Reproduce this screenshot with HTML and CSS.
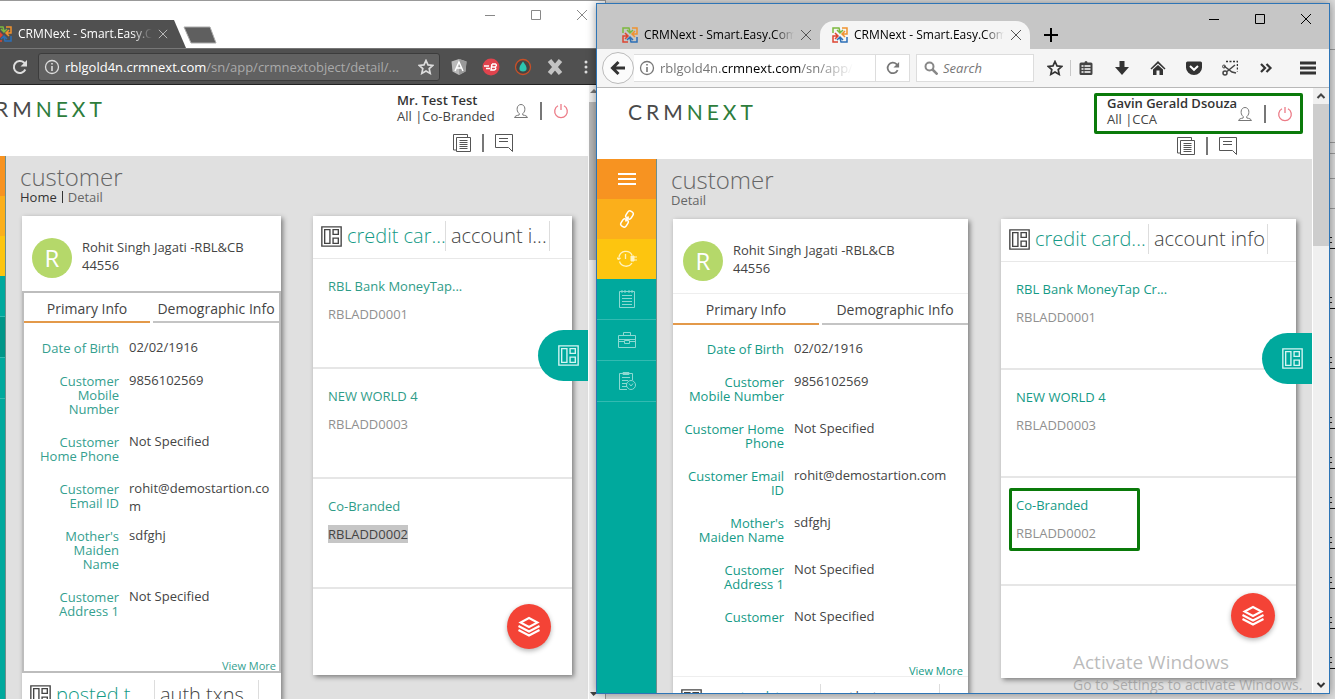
FILE: index.html
```html
<!DOCTYPE html>
<html lang="en">
<head>
<meta charset="utf-8">
<title>CRMNext - Smart.Easy.Complete</title>
<link rel="stylesheet" href="styles.css">
</head>
<body>
<svg class="defs" aria-hidden="true">
  <symbol id="favicon" viewBox="0 0 16 16"><g fill="none" stroke-width="1.500"><path d="M1 6V1h6l1 4M5 3l3 3 3-3" stroke="#7cb93e"/><path d="M10 1h5v6h-4M13 4l-3 3 3 3" stroke="#f0922e"/><path d="M15 10v5H9l-1-4M5 13l3-3 3 3" stroke="#2c6fb7"/><path d="M6 15H1V9h4M3 6l3 3-3 3" stroke="#dd4632"/></g></symbol>
  <symbol id="close" viewBox="0 0 12 12"><path d="M1 1l10 10M11 1L1 11" fill="none" stroke="currentColor"/></symbol>
  <symbol id="min" viewBox="0 0 12 12"><path d="M1 6.500h10" fill="none" stroke="currentColor"/></symbol>
  <symbol id="max" viewBox="0 0 12 12"><path d="M1.500 1.500h9v9h-9z" fill="none" stroke="currentColor"/></symbol>
  <symbol id="reload" viewBox="0 0 16 16"><path d="M13.300 10.500A6 6 0 1 1 12 3.600l1.500 1.600" fill="none" stroke="currentColor" stroke-width="2"/><path d="M15 1v6.500H8.500z" fill="currentColor"/></symbol>
  <symbol id="info" viewBox="0 0 16 16"><circle cx="8" cy="8" r="6.500" fill="none" stroke="currentColor" stroke-width="1.300"/><path d="M8 7v5M8 4v1.600" stroke="currentColor" stroke-width="1.600"/></symbol>
  <symbol id="star" viewBox="0 0 16 16"><path d="M8 1.500l2 4.400 4.800.5-3.600 3.200 1 4.800L8 12l-4.200 2.400 1-4.800L1.200 6.400 6 5.900z" fill="none" stroke="currentColor" stroke-width="1.700"/></symbol>
  <symbol id="person" viewBox="0 0 16 16"><path d="M1.500 14.500h13c-.5-1.500-2-2-4.700-2.500v-1.500c2-1.500 2.200-3.500 2-5.500C11.500 3 10 1.500 8 1.500S4.500 3 4.200 5c-.2 2 0 4 2 5.500V12c-2.700.5-4.200 1-4.700 2.500z" fill="none" stroke="#777"/></symbol>
  <symbol id="power" viewBox="0 0 16 16"><path d="M5 2.800a6.300 6.300 0 1 0 6 0M8 1v6" fill="none" stroke="#ec7b87" stroke-width="1.300"/></symbol>
  <symbol id="docs" viewBox="0 0 20 20"><path d="M4 17H1.500V1.500h14V4M4.500 4.500h14v14h-14zM7.500 7.500h8M7.500 9.500h8M7.500 11.500h8M7.500 13.500h8M7.500 15.500h8" fill="none" stroke="#555"/></symbol>
  <symbol id="chat" viewBox="0 0 20 20"><path d="M1.500 1.500h17v17l-4-4h-13zM5 5.500h9M5 8.500h9" fill="none" stroke="#555"/></symbol>
  <symbol id="grid" viewBox="0 0 20 20"><path d="M.8.800h18.400v18.400H.8zM3.500 3.500h5v13h-5zM11.500 3.500h5v4.500h-5zM11.500 11.500h5v5h-5z" fill="none" stroke="currentColor" stroke-width="1.300"/></symbol>
  <symbol id="layers" viewBox="0 0 24 22"><path d="M12 2l8.500 4.500L12 11 3.500 6.500z" fill="none" stroke="#fff" stroke-width="2"/><path d="M1.500 10L12 15.500 22.500 10M1.500 14L12 19.500 22.500 14" fill="none" stroke="#fff" stroke-width="2"/></symbol>
</svg>

<div class="desktop">
  <div class="sheet" aria-hidden="true"><svg width="5" height="699" viewBox="0 0 5 699"><path d="M0 49.500h5M0 142.500h5M0 153.500h5M0 178.500h5M0 208.500h5" stroke="#999"/><path d="M0 248.500h5M0 308.500h5M0 368.500h5M0 428.500h5M0 468.500h5M0 508.500h5M0 548.500h5M0 588.500h5M0 628.500h5M0 668.500h5" stroke="#111"/><path d="M0 237.500h2M0 242.500h2M0 297.500h2M0 302.500h2M0 357.500h2M0 362.500h2M0 417.500h2M0 422.500h2M0 457.500h2M0 462.500h2M0 497.500h2M0 502.500h2M0 537.500h2M0 542.500h2M0 577.500h2M0 582.500h2M0 617.500h2M0 622.500h2M0 657.500h2M0 662.500h2" stroke="#222"/></svg></div>

  <section class="window back">
    <div class="titlebar">
      <div class="ctab">
        <svg class="i16"><use href="#favicon"/></svg>
        <span class="tabtext">CRMNext - Smart.Easy.Com</span>
        <button class="ico" aria-label="Close tab"><svg class="i10"><use href="#close"/></svg></button>
      </div>
      <svg class="newtab" width="34" height="18" viewBox="0 0 34 18"><path d="M1 1h26l6 16H8z" fill="#5f5f5f" stroke="#aaa"/></svg>
      <div class="controls">
        <button class="ico" aria-label="Minimize"><svg class="i12"><use href="#min"/></svg></button>
        <button class="ico" aria-label="Maximize"><svg class="i12"><use href="#max"/></svg></button>
        <button class="ico" aria-label="Close"><svg class="i12"><use href="#close"/></svg></button>
      </div>
    </div>
    <div class="toolbar">
      <button class="ico reload" aria-label="Reload"><svg class="i16"><use href="#reload"/></svg></button>
      <div class="address">
        <svg class="i16"><use href="#info"/></svg>
        <span class="url"><b>rblgold4n.crmnext.com</b>/sn/app/crmnextobject/detail/...</span>
        <button class="ico" aria-label="Bookmark"><svg class="i16"><use href="#star"/></svg></button>
      </div>
      <div class="extensions">
        <svg class="i18" viewBox="0 0 18 18"><path d="M9 1l7.500 2.500-1 10L9 17l-6.500-3.500-1-10z" fill="#b9b9b9"/><path d="M9 1l7.500 2.500-1 10L9 17z" fill="#999"/><path d="M5 13l4-9 4 9M6.500 10h5" fill="none" stroke="#fff" stroke-width="1.500"/></svg>
        <svg class="i18" viewBox="0 0 18 18"><circle cx="9" cy="9" r="8.500" fill="#e0434d"/><path d="M2 8h5M4 10.500h4M10 6h3.500q2 1.500-.5 3 2 2-1 3H9l1-6M9.500 9H13" fill="none" stroke="#fff" stroke-width="1.500"/></svg>
        <svg class="i18" viewBox="0 0 18 18"><circle cx="9" cy="9" r="7.500" fill="#444" stroke="#c75028" stroke-width="1.300"/><path d="M9 3.500c5 6 4.500 10 0 10s-5-4 0-10z" fill="#2cc5b0"/></svg>
        <svg class="i18" viewBox="0 0 18 18"><path d="M3.500 2.500l11 13M14.500 2.500l-11 13" stroke="#c4c4c4" stroke-width="4.500"/></svg>
        <svg class="i18" viewBox="0 0 18 18"><g fill="#ddd"><circle cx="8" cy="4" r="1.500"/><circle cx="8" cy="9" r="1.500"/><circle cx="8" cy="14" r="1.500"/></g></svg>
      </div>
    </div>
    <div class="viewport">
      <div class="page">
        <header class="top">
          <div class="logo">CRM<span>NEXT</span></div>
          <div class="account">
            <div class="user">
              <p class="who"><b>Mr. Test Test</b>All |Co-Branded</p>
              <svg class="i16"><use href="#person"/></svg><i class="bar"></i><svg class="i16"><use href="#power"/></svg>
            </div>
            <div class="tools"><svg class="i20"><use href="#docs"/></svg><i class="bar"></i><svg class="i20"><use href="#chat"/></svg></div>
          </div>
        </header>
        <div class="body">
          <nav class="side"><i class="c1"></i><i class="c2"></i><i class="c3"></i><i></i><i class="on"></i><i></i></nav>
          <main class="main">
            <div class="heading">
              <h1>customer</h1>
              <p class="crumbs"><a href="#">Home</a><i></i>Detail</p>
            </div>
            <div class="cards">
              <article class="card profile">
                <div class="person"><span class="avatar">R</span><p>Rohit Singh Jagati -RBL&amp;CB<br>44556</p></div>
                <div class="info">
                  <div class="tabs"><button class="sel">Primary Info</button><button>Demographic Info</button></div>
                  <dl>
                    <div><dt>Date of Birth</dt><dd>02/02/1916</dd></div>
                    <div><dt>Customer Mobile Number</dt><dd>9856102569</dd></div>
                    <div><dt>Customer Home Phone</dt><dd>Not Specified</dd></div>
                    <div><dt>Customer Email ID</dt><dd>rohit@demostartion.com</dd></div>
                    <div><dt>Mother's Maiden Name</dt><dd>sdfghj</dd></div>
                    <div><dt>Customer Address 1</dt><dd>Not Specified</dd></div>
                  </dl>
                  <a class="more" href="#">View More</a>
                </div>
                <div class="switch"><svg class="i21"><use href="#grid"/></svg><button class="sel">posted t...</button><button>auth txns</button></div>
              </article>
              <article class="card list">
                <div class="switch"><svg class="i21"><use href="#grid"/></svg><button class="sel">credit car...</button><button>account i...</button></div>
                <div class="item"><a href="#">RBL Bank MoneyTap...</a><p>RBLADD0001</p></div>
                <div class="item"><a href="#">NEW WORLD 4</a><p>RBLADD0003</p></div>
                <div class="item"><a href="#">Co-Branded</a><p><mark>RBLADD0002</mark></p></div>
              </article>
            </div>
          </main>
        </div>
        <button class="drawer" aria-label="Open panel"><svg class="i21"><use href="#grid"/></svg></button>
        <button class="fab" aria-label="Layers"><svg width="24" height="22"><use href="#layers"/></svg></button>
      </div>
      <div class="scroll"><svg width="9" height="12" viewBox="0 0 9 12"><path d="M1 8l4-4 4 4z" fill="#777"/></svg><i class="thumb"></i><svg class="end" width="9" height="12" viewBox="0 0 9 12"><path d="M1 5l3.500 4L9 5z" fill="#444"/></svg></div>
    </div>
  </section>

  <section class="window front">
    <div class="titlebar">
      <div class="ftab">
        <svg class="i16"><use href="#favicon"/></svg>
        <span class="tabtext">CRMNext - Smart.Easy.Comp</span>
        <button class="ico" aria-label="Close tab"><svg class="i12"><use href="#close"/></svg></button>
      </div>
      <div class="ftab active">
        <svg class="i16"><use href="#favicon"/></svg>
        <span class="tabtext">CRMNext - Smart.Easy.Comp</span>
        <button class="ico" aria-label="Close tab"><svg class="i12"><use href="#close"/></svg></button>
      </div>
      <button class="ico plus" aria-label="New tab"><svg class="i14" viewBox="0 0 14 14"><path d="M0 7h14M7 0v14" stroke="#000" stroke-width="2"/></svg></button>
      <div class="controls">
        <button class="ico" aria-label="Minimize"><svg class="i12"><use href="#min"/></svg></button>
        <button class="ico" aria-label="Maximize"><svg class="i12"><use href="#max"/></svg></button>
        <button class="ico" aria-label="Close"><svg class="i12"><use href="#close"/></svg></button>
      </div>
    </div>
    <div class="toolbar">
      <button class="ico goback" aria-label="Back"><svg class="i16" viewBox="0 0 16 16"><path d="M15 8H3M8.500 2L2.500 8l6 6" fill="none" stroke="#333" stroke-width="3"/></svg></button>
      <div class="address">
        <svg class="i16"><use href="#info"/></svg>
        <span class="url">rblgold4n.<b>crmnext.com</b>/sn/app/c</span>
        <button class="ico" aria-label="Reload"><svg class="i14"><use href="#reload"/></svg></button>
      </div>
      <label class="search"><svg class="i14" viewBox="0 0 14 14"><circle cx="5.500" cy="5.500" r="4" fill="none" stroke="#888" stroke-width="2"/><path d="M8.500 8.500l5 5" stroke="#888" stroke-width="2.500"/></svg><input type="text" placeholder="Search" aria-label="Search"></label>
      <div class="extensions">
        <svg class="i16"><use href="#star"/></svg>
        <i class="rule"></i>
        <svg class="i16" viewBox="0 0 16 16"><path d="M5 2.500h1.500a1.500 1.500 0 0 1 3 0H13a1.500 1.500 0 0 1 1.500 1.500v9.500A1.500 1.500 0 0 1 13 15H3a1.500 1.500 0 0 1-1.500-1.500V4A1.500 1.500 0 0 1 3 2.500z" fill="#444"/><path d="M3.500 6h2M6.500 6h6M3.500 9h2M6.500 9h6M3.500 12h2M6.500 12h6" stroke="#fff" stroke-width="1.600"/></svg>
        <svg class="i16" viewBox="0 0 16 16"><path d="M5.500 1h5v6H15l-7 8-7-8h4.500z" fill="#333"/></svg>
        <svg class="i16" viewBox="0 0 16 16"><path d="M.5 8.500L8 1l7.500 7.500-1 1L8 3.500l-6.500 6zM3 9.500l5-4.600 5 4.600V15H9.500v-4.500h-3V15H3z" fill="#333"/></svg>
        <svg class="i16" viewBox="0 0 16 16"><path d="M1.500 1.500h13a1.500 1.500 0 0 1 1.500 1.500v4.500a8 7.500 0 0 1-16 0V3a1.500 1.500 0 0 1 1.500-1.500z" fill="#333"/><path d="M4 6l4 3.800L12 6" fill="none" stroke="#fff" stroke-width="2"/></svg>
        <svg class="i16" viewBox="0 0 16 16"><path d="M4 1.500h11.500v10" fill="none" stroke="#333" stroke-width="1.500" stroke-dasharray="2 1.500"/><path d="M2 6l8 6 4 1M13 5L5 11.500" fill="none" stroke="#444" stroke-width="1.500"/><circle cx="3" cy="13" r="2" fill="none" stroke="#444" stroke-width="1.500"/><circle cx="2" cy="6.500" r="1.500" fill="none" stroke="#444"/></svg>
        <svg class="i16" viewBox="0 0 16 16"><path d="M3 4l4 4-4 4M8.500 4l4 4-4 4" fill="none" stroke="#333" stroke-width="2.200"/></svg>
        <svg class="i16 menu" viewBox="0 0 16 16"><path d="M0 3h16M0 8h16M0 13h16" stroke="#333" stroke-width="3"/></svg>
      </div>
    </div>
    <div class="viewport">
      <div class="page">
        <header class="top">
          <div class="logo">CRM<span>NEXT</span></div>
          <div class="account">
            <div class="user marked">
              <p class="who"><b>Gavin Gerald Dsouza</b>All |CCA</p>
              <svg class="i16"><use href="#person"/></svg><i class="bar"></i><svg class="i16"><use href="#power"/></svg>
            </div>
            <div class="tools"><svg class="i20"><use href="#docs"/></svg><i class="bar"></i><svg class="i20"><use href="#chat"/></svg></div>
          </div>
        </header>
        <div class="body">
          <nav class="side">
            <i class="c1"><svg class="i20" viewBox="0 0 20 20"><path d="M1 5h18M1 10h18M1 15h18" stroke="#fff" stroke-width="2"/></svg></i>
            <i class="c2"><svg class="i20" viewBox="0 0 20 20"><g fill="none" stroke="#fff" stroke-width="1.500"><rect x="9.500" y="2" width="6" height="8" rx="2.500" transform="rotate(32 12.500 6)"/><rect x="4.500" y="10" width="6" height="8" rx="2.500" transform="rotate(32 7.500 14)"/><path d="M8.500 12.500l3-5"/></g></svg></i>
            <i class="c3"><svg class="i20" viewBox="0 0 20 20"><path d="M2 8a7 7 0 0 1 13-2M15 14A7 7 0 0 1 2.500 12.500M8.500 5v5" fill="none" stroke="#fff3c0" stroke-width="1.300"/><path d="M0 9l1.500 2L3.500 9zM14 7h3v5h-3zM17 8h3M17 11h3" fill="#fff3c0" stroke="#fff3c0"/></svg></i>
            <i><svg class="i20" viewBox="0 0 20 20"><path d="M2.500 2.500h15v16h-15zM5 6.500h10M5 9.500h10M5 12.500h10M5 15.500h10M5 1v3M8 1v3M12 1v3M15 1v3" fill="none" stroke="#8cd9d2"/></svg></i>
            <i><svg class="i20" viewBox="0 0 20 20"><path d="M1.500 5.500h17v12h-17zM6.500 5V2.500h7V5M1.500 11.500h6M12.500 11.500h6M7.500 10.500h5v3h-5zM1.500 9.500h17" fill="none" stroke="#8cd9d2"/></svg></i>
            <i><svg class="i20" viewBox="0 0 20 20"><path d="M10 18.500H2.500v-16h13V9M5 6.500h8M5 9.500h6M5 12.500h5M5 15.500h5M6 1.500h6v2H6z" fill="none" stroke="#8cd9d2"/><circle cx="14" cy="14" r="4.500" fill="none" stroke="#8cd9d2"/><path d="M12 12.500l2 2.500 2-2.500" fill="none" stroke="#8cd9d2"/></svg></i>
          </nav>
          <main class="main">
            <div class="heading">
              <h1>customer</h1>
              <p class="crumbs">Detail</p>
            </div>
            <div class="cards">
              <article class="card profile">
                <div class="person"><span class="avatar">R</span><p>Rohit Singh Jagati -RBL&amp;CB<br>44556</p></div>
                <div class="info">
                  <div class="tabs"><button class="sel">Primary Info</button><button>Demographic Info</button></div>
                  <dl>
                    <div><dt>Date of Birth</dt><dd>02/02/1916</dd></div>
                    <div><dt>Customer Mobile Number</dt><dd>9856102569</dd></div>
                    <div><dt>Customer Home Phone</dt><dd>Not Specified</dd></div>
                    <div><dt>Customer Email ID</dt><dd>rohit@demostartion.com</dd></div>
                    <div><dt>Mother's Maiden Name</dt><dd>sdfghj</dd></div>
                    <div><dt>Customer Address 1</dt><dd>Not Specified</dd></div>
                    <div><dt>Customer</dt><dd>Not Specified</dd></div>
                  </dl>
                  <a class="more" href="#">View More</a>
                </div>
                <div class="switch"><svg class="i21"><use href="#grid"/></svg><button class="sel">posted txn...</button><button>auth txns</button></div>
              </article>
              <article class="card list">
                <div class="switch"><svg class="i21"><use href="#grid"/></svg><button class="sel">credit card...</button><button>account info</button></div>
                <div class="item"><a href="#">RBL Bank MoneyTap Cr...</a><p>RBLADD0001</p></div>
                <div class="item"><a href="#">NEW WORLD 4</a><p>RBLADD0003</p></div>
                <div class="item outlined"><a href="#">Co-Branded</a><p>RBLADD0002</p></div>
              </article>
            </div>
          </main>
        </div>
        <button class="drawer" aria-label="Open panel"><svg class="i21"><use href="#grid"/></svg></button>
        <button class="fab" aria-label="Layers"><svg width="24" height="22"><use href="#layers"/></svg></button>
      </div>
      <div class="scroll"><svg class="i16" viewBox="0 0 16 16"><path d="M4.500 10L8 6.500l3.500 3.500" fill="none" stroke="#444" stroke-width="2"/></svg><i class="thumb"></i><svg class="i16 end" viewBox="0 0 16 16"><path d="M4.500 6L8 9.500 11.500 6" fill="none" stroke="#333" stroke-width="2"/></svg></div>
    </div>
  </section>

  <div class="watermark"><p class="big">Activate Windows</p><p>Go to Settings to activate Windows.</p></div>
</div>
</body>
</html>
```
FILE: styles.css
```css
*, *::after { box-sizing: border-box; }
body { margin: 0; font: 13px/18px "Open Sans", "Noto Sans", sans-serif; color: #444; }
p, h1, dl, dd { margin: 0; }
button { border: 0; padding: 0; background: none; font: inherit; color: inherit; }
a { text-decoration: none; }
svg { flex: none; display: block; }
.defs { position: absolute; width: 0; height: 0; }
.i10 { width: 10px; height: 10px; }
.i12 { width: 12px; height: 12px; }
.i14 { width: 14px; height: 14px; }
.i16 { width: 16px; height: 16px; }
.i18 { width: 18px; height: 18px; }
.i20 { width: 20px; height: 20px; }
.i21 { width: 21px; height: 21px; }

/* Desktop and windows */
.desktop { position: relative; height: 100vh; overflow: hidden; background: #dcdcdc; }
.sheet { position: absolute; top: 0; right: 0; width: 5px; }
.window { position: absolute; display: flex; flex-direction: column; overflow: hidden; }
.back { left: -54px; right: 729px; top: 0; bottom: 0; border-top: 1px solid #999; border-right: 1px solid #999; background: #fff; }
.front { left: 596px; right: 5px; top: 3px; bottom: 5px; border: 1px solid #2e75b6; background: #fff; box-shadow: 0 0 9px rgba(0, 0, 0, .4); }
.titlebar { display: flex; flex: none; }
.ico { display: flex; align-items: center; justify-content: center; }
.tabtext { flex: 1; min-width: 0; overflow: hidden; white-space: nowrap; font-size: 12px; mask-image: linear-gradient(to left, transparent, #000 20px); }
.controls { display: flex; gap: 34px; margin-left: auto; }
.controls .ico { height: 12px; }
.toolbar { display: flex; flex: none; align-items: center; }
.address { display: flex; align-items: center; min-width: 0; }
.url { flex: 1; min-width: 0; overflow: hidden; white-space: nowrap; }
.url b { font-weight: 400; }
.extensions { display: flex; align-items: center; }

.back .titlebar { height: 47px; }
.back .controls { padding: 8px 17px 0 0; color: #888; }
.ctab { display: flex; align-items: center; gap: 6px; width: 240px; margin-top: 19px; padding: 0 18px 0 50px; background: #505050; color: #fff; clip-path: polygon(0 0, 228px 0, 100% 100%, 0 100%); }
.ctab .ico { color: #ccc; }
.newtab { margin: 25px 0 0 -3px; }
.back .toolbar { height: 37px; padding-left: 66px; gap: 10px; background: #505050; color: #ddd; border-bottom: 1px solid #222; border-top: 1px solid #777; }
.back .address { flex: none; width: 402px; height: 28px; padding: 0 5px; gap: 5px; background: #616161; border: 1px solid #3c3c3c; border-radius: 3px; }
.back .url { color: #aaa; }
.back .url b { color: #fff; }
.back .extensions { gap: 14px; }

.front .titlebar { height: 45px; background: #c6c6c6; color: #000; align-items: flex-end; padding-left: 13px; }
.front .controls { align-self: flex-start; padding: 9px 17px 0 0; }
.ftab { display: flex; align-items: center; gap: 6px; width: 210px; height: 28px; padding: 0 8px 0 12px; }
.ftab .ico { color: #555; }
.active { background: #f5f5f5; border-radius: 14px 14px 0 0; }
.plus { height: 28px; margin-left: 14px; }
.front .toolbar { height: 39px; padding-left: 5px; background: #f5f5f5; border-bottom: 1px solid #b8b8b8; }
.goback { width: 32px; height: 32px; border: 1px solid #bbb; border-radius: 50%; background: #fbfbfb; }
.front .address { flex: 1; height: 28px; border: 1px solid #ddd; border-left: 0; background: #fff; padding-left: 5px; gap: 5px; color: #777; }
.front .url { mask-image: linear-gradient(to right, #000 75%, transparent 92%); }
.front .url b { color: #000; }
.front .address .ico { width: 34px; height: 26px; border-left: 1px solid #ddd; }
.search { display: flex; align-items: center; gap: 5px; width: 118px; height: 28px; margin-left: 6px; padding-left: 7px; background: #fff; border: 1px solid #ddd; }
.search input { flex: 1; min-width: 0; border: 0; padding: 0; background: none; font: italic 13px/18px "Open Sans", sans-serif; outline: 0; }
.search input::placeholder { color: #777; }
.front .extensions { gap: 20px; padding: 0 13px; color: #333; }
.rule { width: 1px; height: 16px; margin: 0 -13px; background: #c8c8c8; }
.menu { margin-left: 6px; }

/* Page */
.viewport { display: flex; flex: 1; min-height: 0; }
.page { position: relative; display: flex; flex-direction: column; flex: 1; min-width: 0; overflow: hidden; background: #fff; }
.top { display: flex; justify-content: space-between; flex: none; height: 71px; padding: 0 9px 0 31px; }
.logo { padding-top: 10px; font: 21px/28px Lato, sans-serif; letter-spacing: 4px; color: #4a4a4a; }
.logo span { color: #2e7d3c; }
.account { display: flex; flex-direction: column; }
.user { display: flex; align-items: center; width: 209px; height: 41px; margin-top: 5px; padding: 0 7px 0 10px; border: 3px solid transparent; }
.back .user { width: 191px; padding-left: 6px; }
.marked { border-color: #0a7a0a; border-radius: 2px; }
.who { flex: 1; min-width: 0; padding-bottom: 5px; line-height: 16px; white-space: nowrap; }
.who b { display: block; font-weight: 600; color: #333; }
.bar { width: 2px; height: 18px; margin: 0 11px; background: #777; }
.tools { display: flex; align-items: center; margin: 2px 0 0 82px; }
.tools .bar { margin: 0 10px; }
.back .tools { margin-left: 64px; }
.body { display: flex; flex: 1; min-height: 0; background: #e0e0e0; }
.side { display: flex; flex-direction: column; flex: none; width: 60px; background: #00a99d; border-right: 1px solid #6f8f8c; }
.side i { display: flex; align-items: center; justify-content: center; flex: none; height: 41px; border-bottom: 1px solid #33bab1; }
.side .c1, .side .c2, .side .c3 { height: 40px; border: 0; }
.side .c1 { background: #f79321; }
.side .c2 { background: #fbaf1b; }
.side .c3 { background: #fdc50f; }
.side .on { background: #009688; }
.main { flex: 1; min-width: 0; }
.heading { height: 60px; padding: 6px 14px 0; }
h1 { font-size: 24px; line-height: 29px; font-weight: 300; color: #666; }
.crumbs { display: flex; align-items: center; gap: 5px; line-height: 12px; color: #666; }
.crumbs a { color: #333; }
.crumbs i { width: 1px; height: 12px; background: #333; }
.cards { display: flex; gap: 32px; padding: 0 16px; }
.front .cards { gap: 33px; }
.card { flex: 1; min-width: 0; height: 520px; background: #fff; box-shadow: 2px 2px 5px rgba(0, 0, 0, .45); }
.list { height: 459px; }
.person { display: flex; align-items: center; gap: 10px; height: 75px; padding: 9px 10px 0; white-space: nowrap; }
.avatar { display: grid; place-items: center; flex: none; width: 40px; height: 40px; border-radius: 50%; background: #b5d86a; color: #fff; font-size: 24px; line-height: 32px; }
.person p { padding-bottom: 4px; }
.info { display: flex; flex-direction: column; height: 382px; border: 2px solid #bdbdbd; }
.front .person { height: 74px; }
.front .info { height: 384px; border: 0; border-top: 1px solid #eee; border-bottom: 1px solid #eee; }
.tabs { display: flex; gap: 3px; flex: none; height: 30px; }
.front .tabs { height: 31px; }
.tabs button { flex: 1; padding-top: 3px; border-bottom: 2px solid #c4c4c4; font-size: 14px; white-space: nowrap; }
.tabs .sel { border-color: #e3994a; }
dl { flex: none; max-height: 302px; padding-top: 15px; overflow: hidden; }
.front dl { padding-top: 14px; max-height: 300px; }
dl div { display: flex; gap: 10px; }
dt { flex: none; width: 84px; margin-left: 11px; padding: 3px 0 16px; line-height: 14px; text-align: right; color: #35a08f; }
.front dt { width: 102px; margin-left: 9px; color: #149a86; font-weight: 500; }
dd { flex: 1; min-width: 0; padding-bottom: 11px; overflow-wrap: anywhere; }
.back dd { padding-right: 8px; }
.more { margin: auto 3px 0 auto; font-size: 11px; line-height: 10px; color: #35a08f; }
.front .more { margin-right: 5px; color: #149a86; font-weight: 500; }
.switch { display: flex; align-items: center; height: 43px; padding: 0 8px 2px; border-bottom: 1px solid #e8e8e8; }
.profile .switch { margin-top: 2px; }
.switch button { width: 104px; height: 30px; padding-left: 5px; border-right: 1px solid #ddd; overflow: hidden; font-size: 20px; line-height: 30px; font-weight: 300; text-align: left; white-space: nowrap; }
.front .switch button { width: 119px; }
.switch .sel { color: #149a86; }
.item { position: relative; height: 110px; padding: 18px 15px 0; border-bottom: 2px solid #e6e6e6; }
.front .item { height: 108px; }
.item a { color: #2f9c88; }
.front .item a { font-weight: 500; color: #149a86; }
.item p { margin-top: 10px; color: #909090; }
.item mark { background: #c6c6c6; color: #444; }
.outlined::after { content: ""; position: absolute; left: 8px; top: 10px; width: 131px; height: 63px; border: 3px solid #0a7a0a; border-radius: 2px; }
.drawer { position: absolute; right: 0; top: 245px; width: 50px; height: 51px; padding-left: 20px; border-radius: 26px 0 0 26px; background: #00a99d; color: #d5f5f2; }
.fab { position: absolute; right: 37px; bottom: 50px; display: grid; place-items: center; width: 44px; height: 45px; border-radius: 50%; background: #f44336; box-shadow: 0 2px 5px rgba(0, 0, 0, .3); }
.front .fab { bottom: 55px; }
.scroll { display: flex; flex-direction: column; flex: none; width: 17px; background: #f0f0f0; border-left: 1px solid #fff; }
.thumb { height: 142px; background: #cdcdcd; }
.back .thumb { margin-top: 5px; height: 158px; background: #b8b8b8; }
.scroll .end { margin-top: auto; }

.watermark { position: absolute; left: 1073px; bottom: 5px; color: rgba(120, 120, 120, .5); white-space: nowrap; pointer-events: none; font-size: 14px; }
.big { font-size: 19px; line-height: 28px; }
```
